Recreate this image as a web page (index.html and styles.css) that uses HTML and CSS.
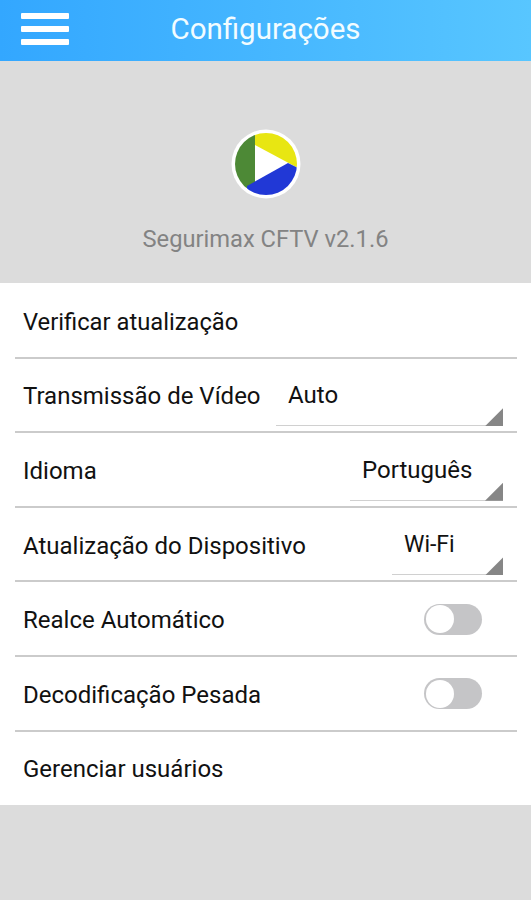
FILE: index.html
```html
<!DOCTYPE html>
<html lang="pt-BR">
<head>
  <meta charset="UTF-8">
  <meta name="viewport" content="width=device-width, initial-scale=1.0">
  <title>Configurações</title>
  <link rel="stylesheet" href="styles.css">
</head>
<body>
  <header class="topbar">
    <button class="menu-button" aria-label="Menu">
      <span></span>
      <span></span>
      <span></span>
    </button>
    <h1>Configurações</h1>
  </header>

  <section class="about">
    <svg class="logo" viewBox="0 0 70 70">
      <defs>
        <clipPath id="disc"><circle cx="35" cy="35" r="31"/></clipPath>
      </defs>
      <circle cx="35" cy="35" r="34.5" fill="#fff"/>
      <g clip-path="url(#disc)">
        <path d="M0 0H24V54L0 68Z" fill="#4d8936"/>
        <path d="M24 0H70V39L66 38.5L24 16Z" fill="#e8e612"/>
        <path d="M16 57L57 34L70 40.5V70H16Z" fill="#2138d6"/>
      </g>
    </svg>
    <p class="version">Segurimax CFTV v2.1.6</p>
  </section>

  <main class="settings">
    <div class="row">
      <span class="label">Verificar atualização</span>
    </div>
    <div class="row">
      <span class="label">Transmissão de Vídeo</span>
      <div class="spinner spinner-video">Auto</div>
    </div>
    <div class="row">
      <span class="label">Idioma</span>
      <div class="spinner spinner-language">Português</div>
    </div>
    <div class="row">
      <span class="label">Atualização do Dispositivo</span>
      <div class="spinner spinner-update">Wi-Fi</div>
    </div>
    <div class="row">
      <span class="label">Realce Automático</span>
      <div class="switch" role="switch" aria-checked="false"></div>
    </div>
    <div class="row">
      <span class="label">Decodificação Pesada</span>
      <div class="switch" role="switch" aria-checked="false"></div>
    </div>
    <div class="row">
      <span class="label">Gerenciar usuários</span>
    </div>
  </main>
</body>
</html>
```

FILE: styles.css
```css
* {
  box-sizing: border-box;
}

body {
  margin: 0;
  min-height: 100vh;
  background-color: #dcdcdc;
  font-family: Roboto, sans-serif;
  font-size: 24px;
  color: #111;
}

.topbar {
  display: grid;
  grid-template-columns: 90px 1fr 90px;
  align-items: center;
  height: 61px;
  padding-bottom: 4px;
  background: linear-gradient(to right, #33a7ff, #58c6ff);
}

.menu-button {
  display: flex;
  flex-direction: column;
  gap: 7px;
  width: 48px;
  margin-left: 21px;
  padding: 0;
  border: none;
  background: none;
}

.menu-button span {
  width: 100%;
  height: 6px;
  border-radius: 1px;
  background-color: #fff;
}

.topbar h1 {
  margin: 0;
  font-size: 29.5px;
  font-weight: 400;
  line-height: 34px;
  text-align: center;
  color: #f2fcff;
}

.about {
  height: 222px;
  padding-top: 68px;
  text-align: center;
}

.logo {
  display: block;
  width: 70px;
  height: 70px;
  margin: 0 auto;
}

.version {
  margin: 25px 0 0;
  font-size: 23.7px;
  line-height: 30px;
  color: #838383;
}

.settings {
  padding: 1px 14px 0 15px;
  background-color: #fff;
}

.row {
  display: flex;
  justify-content: space-between;
  align-items: center;
  height: 74.6px;
  padding: 1px 14px 0 8px;
  border-bottom: 2px solid #cbcbcb;
}

.row:last-child {
  height: 73.4px;
  border-bottom: none;
}

.label {
  padding-top: 2px;
  line-height: 30px;
}

.row:first-child .label {
  font-size: 23.75px;
}

.row:last-child .label {
  padding-top: 1px;
}

.spinner {
  position: relative;
  align-self: flex-end;
  height: 52px;
  margin-bottom: 5px;
  padding-left: 12px;
  line-height: 42px;
  border-bottom: 1px solid #d0d0d0;
}

/* corner marker */
.spinner::after {
  content: "";
  position: absolute;
  right: 0;
  bottom: -1px;
  width: 18px;
  height: 18px;
  background-color: #868686;
  clip-path: polygon(100% 0, 100% 100%, 0 100%);
}

.spinner-video {
  width: 227px;
}

.spinner-language {
  width: 153px;
}

.spinner-update {
  width: 111px;
  font-size: 23px;
  line-height: 44px;
}

.switch {
  width: 58px;
  height: 31px;
  margin-right: 21px;
  padding: 1.5px;
  border-radius: 16px;
  background-color: #c5c5c7;
}

.switch::before {
  content: "";
  display: block;
  width: 28px;
  height: 28px;
  border-radius: 50%;
  background-color: #fff;
}
```
